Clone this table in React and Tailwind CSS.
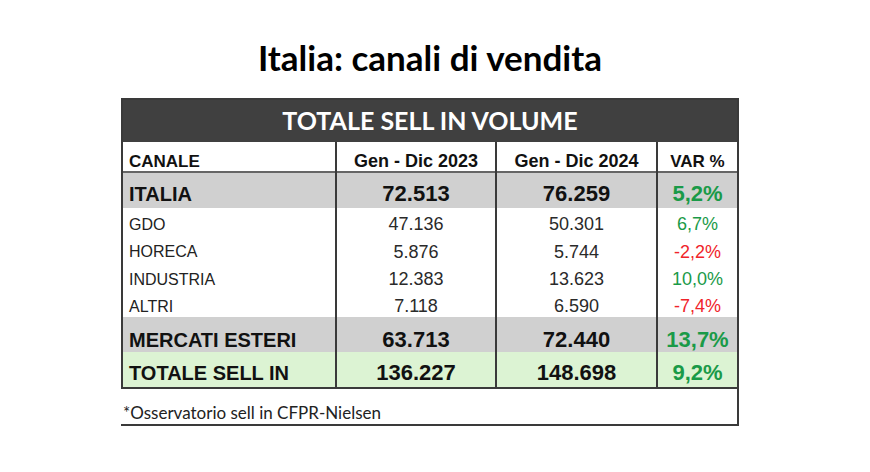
import React from "react";

const rows = [
  { label: "ITALIA", a: "72.513", b: "76.259", v: "5,2%", up: true, main: true, bg: "bg-[#d0d0d0]", h: "h-[35px]" },
  { label: "GDO", a: "47.136", b: "50.301", v: "6,7%", up: true, h: "h-[27px]" },
  { label: "HORECA", a: "5.876", b: "5.744", v: "-2,2%", up: false, h: "h-[28px]" },
  { label: "INDUSTRIA", a: "12.383", b: "13.623", v: "10,0%", up: true, h: "h-[27px]" },
  { label: "ALTRI", a: "7.118", b: "6.590", v: "-7,4%", up: false, h: "h-[27px]" },
  { label: "MERCATI ESTERI", a: "63.713", b: "72.440", v: "13,7%", up: true, main: true, bg: "bg-[#d0d0d0]", h: "h-[35px] pt-[10px]" },
  { label: "TOTALE SELL IN", a: "136.227", b: "148.698", v: "9,2%", up: true, main: true, bg: "bg-[#dcf3d3]", h: "h-[35px] pt-[6px]" },
];

const sep = "border-l-2 border-[#3a3a3a]";

function DataRow({ r }) {
  const label = r.main ? "text-[20px] font-bold text-[#111]" : "text-[16px] text-[#222]";
  const num = r.main ? "text-[22px] font-bold" : "text-[18px]";
  const ink = r.main ? "text-[#111]" : "text-[#2a2a2a]";
  const tone = r.up ? "text-[#1a9a48]" : "text-[#f0242a]";
  return (
    <div className={`grid grid-cols-[212px_160px_161px_81px] ${r.bg || ""}`}>
      <div className={`flex items-center pt-[6px] pl-[6px] ${r.h} ${label}`}>{r.label}</div>
      <div className={`flex items-center justify-center pt-[6px] ${sep} ${r.h} ${num} ${ink}`}>{r.a}</div>
      <div className={`flex items-center justify-center pt-[6px] ${sep} ${r.h} ${num} ${ink}`}>{r.b}</div>
      <div className={`flex items-center justify-center pt-[6px] ${sep} ${r.h} ${num} ${tone}`}>{r.v}</div>
    </div>
  );
}

export default function App() {
  return (
    <div className="min-h-[472px] w-[870px] bg-white pt-[38px] text-[#111]">
      <div className="ml-[121px] w-[618px]">
        <h1 className="text-center font-['Lato',sans-serif] text-[35px] font-bold leading-[38px] text-black">
          Italia: canali di vendita
        </h1>

        <div className="mt-[22px] border-2 border-[#3a3a3a] font-['Liberation_Sans',Arial,sans-serif]">
          <div className="flex h-[42px] items-center justify-center bg-[#404040] font-['Lato',sans-serif] text-[25px] font-bold text-white">
            TOTALE SELL IN VOLUME
          </div>
          <div className="grid h-[31px] grid-cols-[212px_160px_161px_81px] border-b-2 border-[#666] font-bold">
            <div className="flex items-center pt-[6px] pl-[6px] text-[17px]">CANALE</div>
            <div className={`flex items-center justify-center pt-[6px] text-[18px] ${sep}`}>Gen - Dic 2023</div>
            <div className={`flex items-center justify-center pt-[6px] text-[18px] ${sep}`}>Gen - Dic 2024</div>
            <div className={`flex items-center justify-center pt-[6px] text-[17px] ${sep}`}>VAR %</div>
          </div>
          {rows.map((r) => (
            <DataRow key={r.label} r={r} />
          ))}
        </div>

        <div className="flex h-[37px] items-end border-r-2 border-b-2 border-[#3a3a3a] pb-[1px] pl-[2px] font-['Lato',sans-serif] text-[17px] leading-[20px] text-[#222]">
          *Osservatorio sell in CFPR-Nielsen
        </div>
      </div>
    </div>
  );
}
